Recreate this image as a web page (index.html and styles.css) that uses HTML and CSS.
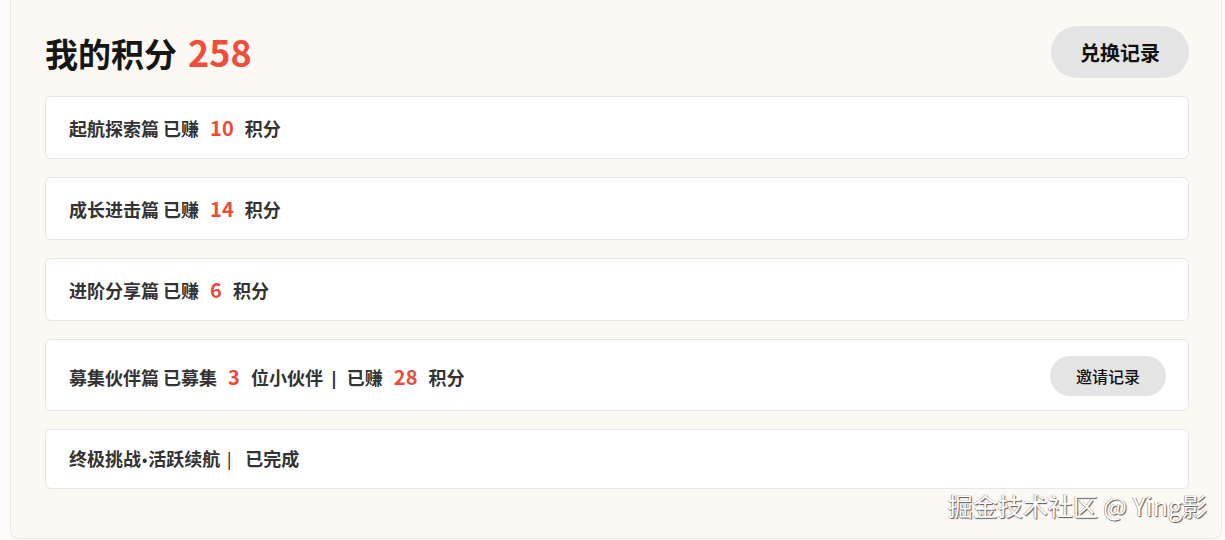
FILE: index.html
```html
<!DOCTYPE html>
<html lang="zh-CN">
<head>
<meta charset="utf-8">
<title>我的积分</title>
<link rel="stylesheet" href="styles.css">
</head>
<body>
<div class="panel">
  <div class="header">
    <h1 class="title">我的积分<span class="total">258</span></h1>
    <button class="btn btn-lg">兑换记录</button>
  </div>
  <div class="list">
    <div class="card"><span class="txt">起航探索篇 已赚<span class="num">10</span>积分</span></div>
    <div class="card"><span class="txt">成长进击篇 已赚<span class="num">14</span>积分</span></div>
    <div class="card"><span class="txt">进阶分享篇 已赚<span class="num">6</span>积分</span></div>
    <div class="card card-btn"><span class="txt">募集伙伴篇 已募集<span class="num">3</span>位小伙伴<span class="sep">|</span>已赚<span class="num">28</span>积分</span><button class="btn btn-sm">邀请记录</button></div>
    <div class="card card-plain"><span class="txt">终极挑战<span class="dot">•</span>活跃续航<span class="bar">|</span>已完成</span></div>
  </div>
  <div class="watermark">掘金技术社区 @ Ying影</div>
</div>
</body>
</html>
```

FILE: styles.css
```css
html, body {
  margin: 0;
  padding: 0;
  background: #fefcfb;
  font-family: "Noto Sans CJK SC", "Noto Sans", sans-serif;
}
body {
  height: 540px;
  overflow: hidden;
}
.panel {
  position: relative;
  margin: 0 3px 0 10px;
  background: #fcf8f4;
  border: 1px solid #efe9e4;
  border-top: 0;
  border-radius: 0 0 8px 8px;
  padding: 26px 32px 49px 34px;
  height: 463px;
}
.header {
  display: flex;
  align-items: center;
  justify-content: space-between;
  height: 52px;
  margin-bottom: 18px;
}
.title {
  margin: 0;
  font-size: 33px;
  font-weight: 700;
  color: #161616;
  line-height: 40px;
}
.total {
  color: #f24c3a;
  font-size: 36px;
  margin-left: 11px;
}
.btn {
  border: 0;
  background: #e4e4e4;
  color: #111;
  border-radius: 999px;
  font-family: "Noto Sans CJK SC", sans-serif;
  cursor: pointer;
  padding: 0;
}
.btn-lg {
  width: 138px;
  height: 52px;
  font-size: 20px;
  font-weight: 700;
}
.btn-sm {
  width: 116px;
  height: 40px;
  font-size: 16px;
  font-weight: 500;
}
.list {
  display: flex;
  flex-direction: column;
  gap: 18px;
}
.card {
  display: flex;
  align-items: center;
  justify-content: space-between;
  background: #fff;
  border: 1px solid #e6e6e6;
  border-radius: 6px;
  padding: 18px 23px;
}
.card-btn {
  padding: 16px 22px 14px 23px;
}
.card-plain {
  padding: 18px 23px 17px;
}
.txt {
  font-size: 18px;
  font-weight: 700;
  color: #333;
  line-height: 21px;
}
.num {
  color: #ef4a39;
  font-size: 20px;
  line-height: 25px;
  margin: 0 11px 0 11px;
}
.sep {
  font-family: "Noto Sans", sans-serif;
  margin: 0 8px 0 6px;
}
.dot {
  font-family: "Noto Sans", sans-serif;
  font-size: 14px;
  margin: 0 1px;
}
.bar {
  font-family: "Noto Sans", sans-serif;
  font-weight: 400;
  margin: 0 11px 0 4px;
}
.watermark {
  position: absolute;
  right: 14px;
  top: 487px;
  font-size: 25px;
  color: #fff;
  text-shadow: 1px 1px 1px #555, -0.5px -0.5px 0.5px #777;
  white-space: nowrap;
}
```
